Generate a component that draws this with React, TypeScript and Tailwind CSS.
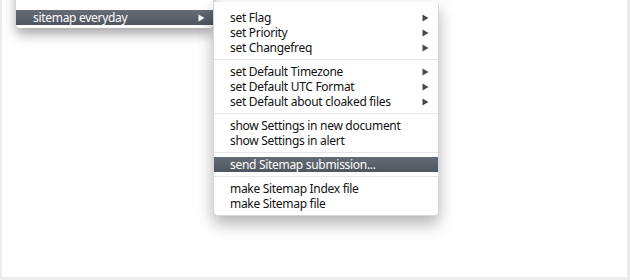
import React from "react";

type Item = { label: string; arrow?: boolean; hi?: boolean } | "sep";

const items: Item[] = [
  { label: "set Flag", arrow: true },
  { label: "set Priority", arrow: true },
  { label: "set Changefreq", arrow: true },
  "sep",
  { label: "set Default Timezone", arrow: true },
  { label: "set Default UTC Format", arrow: true },
  { label: "set Default about cloaked files", arrow: true },
  "sep",
  { label: "show Settings in new document" },
  { label: "show Settings in alert" },
  "sep",
  { label: "send Sitemap submission...", hi: true },
  "sep",
  { label: "make Sitemap Index file" },
  { label: "make Sitemap file" },
];

function Arrow({ white }: { white?: boolean }) {
  return (
    <svg width="7" height="8" viewBox="0 0 7 8" className="shrink-0">
      <path d="M0.5 0.5 L6.5 4 L0.5 7.5 Z" fill={white ? "#ffffff" : "#4a4a4a"} />
    </svg>
  );
}

export default function App() {
  return (
    <div
      className="w-[630px] h-[280px] bg-[#ececec] pl-[2px] pr-[3px] pb-[3px] overflow-hidden"
      style={{ fontFamily: '"Noto Sans", "DejaVu Sans", sans-serif' }}
    >
      <div className="relative w-full h-full bg-white overflow-hidden">
        {/* parent menu */}
        <div className="absolute left-[14px] top-[-20px] w-[197px] h-[48px] bg-white rounded-b-[4px] shadow-[0_6px_12px_rgba(0,0,0,0.35)] pt-[30px]">
          <div className="h-[15px] flex items-center justify-between pl-[17px] pr-[8px] bg-gradient-to-b from-[#666c76] to-[#50565f] text-white text-[12px] leading-[15px] tracking-[-0.3px]">
            <span>sitemap everyday</span>
            <Arrow white />
          </div>
        </div>
        {/* submenu */}
        <div className="absolute left-[211px] top-[2px] w-[226px] bg-white border border-[#d6d6d6] border-t-0 rounded-tr-[4px] rounded-b-[5px] shadow-[0_8px_16px_rgba(0,0,0,0.3)] pt-[8px] pb-[4px] text-[12px] leading-[15px] tracking-[-0.3px] text-[#111]">
          {items.map((it, i) =>
            it === "sep" ? (
              <div key={i} className="h-[9px] flex items-center">
                <div className="w-full h-px bg-[#e6e6e6]" />
              </div>
            ) : (
              <div
                key={i}
                className={
                  "h-[15px] flex items-center justify-between pl-[16px] pr-[9px] " +
                  (it.hi ? "bg-gradient-to-b from-[#666c76] to-[#50565f] text-white" : "")
                }
              >
                <span>{it.label}</span>
                {it.arrow ? <Arrow /> : null}
              </div>
            )
          )}
        </div>
      </div>
    </div>
  );
}
